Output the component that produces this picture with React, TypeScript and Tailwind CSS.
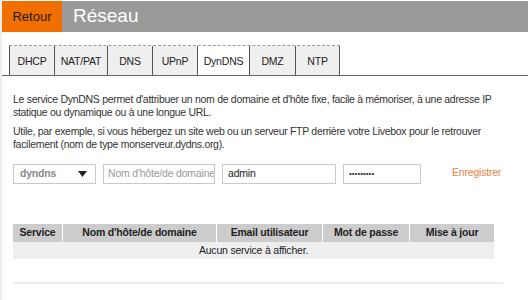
const tabs = [
  { label: "DHCP", w: "w-[45px]" },
  { label: "NAT/PAT", w: "w-[53px]" },
  { label: "DNS", w: "w-[45px]" },
  { label: "UPnP", w: "w-[45px]" },
  { label: "DynDNS", w: "w-[52px]", active: true },
  { label: "DMZ", w: "w-[46px]" },
  { label: "NTP", w: "w-[45px]" },
];

const columns = [
  { label: "Service", w: "w-[50px]" },
  { label: "Nom d'hôte/de domaine", w: "w-[154px]" },
  { label: "Email utilisateur", w: "w-[106px]" },
  { label: "Mot de passe", w: "w-[87px]" },
  { label: "Mise à jour", w: "w-[84px]" },
];

export default function App() {
  return (
    <div
      className="h-[300px] w-[528px] overflow-hidden border-l-2 border-[#eeeeee] bg-white text-[#333]"
      style={{ fontFamily: '"Liberation Sans", Arial, sans-serif' }}
    >
      {/* header */}
      <div className="mt-px flex h-[31px] bg-[#9a9a99]">
        <div className="flex w-[60px] items-center justify-center bg-[#f16e00] text-[13px] text-[#1a1a1a]">Retour</div>
        <div className="flex items-center pl-[11px] text-[19px] text-white">Réseau</div>
      </div>

      {/* tabs */}
      <div className="mt-[13px] flex border-b border-[#666] pl-[7px]">
        <div className="flex border-t border-dashed border-[#999]">
          {tabs.map((t) => (
            <div
              key={t.label}
              className={`flex h-[29px] items-center justify-center border-l border-[#555] pt-[3px] text-[10.5px] tracking-[-0.2px] text-[#222] last:border-r ${t.w} ${
                t.active ? "bg-white" : "bg-[#efefef]"
              }`}
            >
              {t.label}
            </div>
          ))}
        </div>
      </div>

      {/* description */}
      <div className="w-[501px] pl-[11px] pt-[17px] text-[10.5px] leading-[13px] tracking-[-0.3px] text-[#333]">
        <p>
          Le service DynDNS permet d'attribuer un nom de domaine et d'hôte fixe, facile à mémoriser, à une adresse IP
          statique ou dynamique ou à une longue URL.
        </p>
        <p className="mt-[6px]">
          Utile, par exemple, si vous hébergez un site web ou un serveur FTP derrière votre Livebox pour le retrouver
          facilement (nom de type monserveur.dydns.org).
        </p>
      </div>

      {/* form row */}
      <div className="mt-[13px] flex items-start whitespace-nowrap pl-[11px] text-[10.5px] tracking-[-0.2px]">
        <div className="flex h-[20px] w-[83px] items-center justify-between border border-[#c8c8c8] pl-[6px] pr-[8px] font-bold text-[#8a8a8a]">
          dyndns
          <svg width="9" height="6" viewBox="0 0 9 6">
            <path d="M0 0h9L4.5 6z" fill="#222" />
          </svg>
        </div>
        <div className="ml-[7px] flex h-[20px] w-[112px] items-center overflow-hidden border border-[#c8c8c8] pl-[4px] text-[#999]">
          Nom d'hôte/de domaine
        </div>
        <div className="ml-[7px] flex h-[20px] w-[114px] items-center border border-[#c8c8c8] pl-[5px] text-[#222]">
          admin
        </div>
        <div className="ml-[7px] flex h-[20px] w-[78px] items-center border border-[#c8c8c8] pl-[5px] text-[8px] tracking-normal text-[#333]">
          •••••••••
        </div>
        <div className="ml-[31px] mt-[1px] text-[#e8813f]">Enregistrer</div>
      </div>

      {/* table */}
      <div className="ml-[11px] mt-[40px] w-[481px] text-[10.5px] tracking-[-0.2px]">
        <div className="flex h-[18px] bg-[#cccccc]">
          {columns.map((c) => (
            <div
              key={c.label}
              className={`flex items-center justify-center border-r border-white font-bold text-[#222] last:border-r-0 ${c.w}`}
            >
              {c.label}
            </div>
          ))}
        </div>
        <div className="flex h-[17px] items-center justify-center bg-[#eeeeee] text-[#222]">Aucun service à afficher.</div>
      </div>
      <div className="ml-[11px] mt-[23px] h-[2px] w-[490px] bg-[#ececec]" />
    </div>
  );
}
